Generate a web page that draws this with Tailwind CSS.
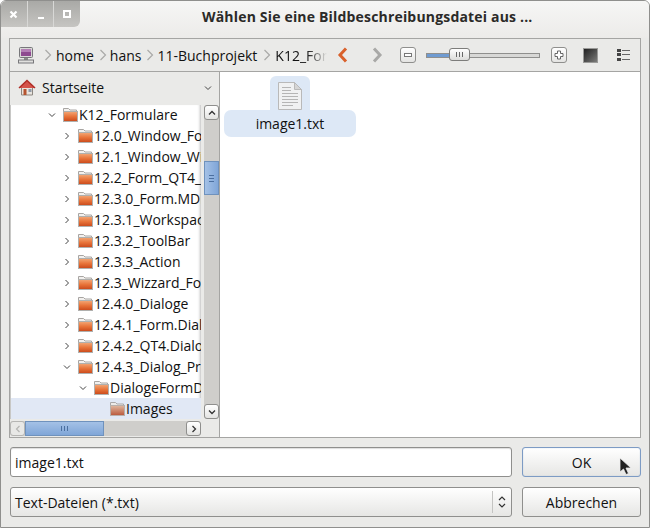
<!DOCTYPE html>
<html lang="de">
<head>
<meta charset="UTF-8" />
<title>Dialog</title>
<script src="https://cdn.jsdelivr.net/npm/@tailwindcss/browser@4"></script>
</head>
<body class="bg-white">
<svg width="0" height="0" class="absolute">
  <defs>
    <linearGradient id="fo" x1="0" y1="0" x2="0" y2="1"><stop offset="0" stop-color="#f3a877"/><stop offset="0.5" stop-color="#e8743a"/><stop offset="1" stop-color="#c9481a"/></linearGradient>
    <linearGradient id="fg" x1="0" y1="0" x2="0" y2="1"><stop offset="0" stop-color="#e0b8a0"/><stop offset="1" stop-color="#b9573a"/></linearGradient>
    <symbol id="folder" viewBox="0 0 16 15"><path d="M1.5 13V1.5h5l1.5 1.500h6.500V5" fill="#f2f0ee" stroke="#a8a5a2"/><rect x="1.500" y="4.500" width="14" height="10" fill="url(#fo)" stroke="#b0b0ae"/></symbol>
    <symbol id="folderg" viewBox="0 0 16 15"><path d="M1.5 13V1.5h5l1.5 1.500h6.500V5" fill="#eceae8" stroke="#aaa8a8"/><rect x="1.500" y="4.500" width="14" height="10" fill="url(#fg)" stroke="#b8b0ac"/></symbol>
    <symbol id="cr" viewBox="0 0 8 8"><path d="M2.500 1l3 3-3 3" fill="none" stroke="#444" stroke-width="1"/></symbol>
    <symbol id="cd" viewBox="0 0 8 8"><path d="M1 2.500l3 3 3-3" fill="none" stroke="#444" stroke-width="1"/></symbol>
  </defs>
</svg>

<div class="w-[650px] h-[528px] flex flex-col bg-[#eaeae8] border border-[#8f8f8d] rounded-t-[6px] overflow-hidden font-['Open_Sans','Noto_Sans',sans-serif] text-[14px] text-[#111]">

  <!-- Titlebar -->
  <div class="h-[37px] shrink-0 flex items-start bg-gradient-to-b from-[#f6f6f5] to-[#ecebe9] relative">
    <div class="flex h-[26px] w-[79px] rounded-br-[6px] bg-gradient-to-b from-[#a9a9a6] to-[#c6c5c2] text-white divide-x divide-[#d8d8d6]">
      <div class="flex-1 flex items-center justify-center">
        <svg width="9" height="9" viewBox="0 0 9 9"><path d="M1.500 1.500l6 6M7.500 1.500l-6 6" stroke="#fff" stroke-width="2.200"/></svg>
      </div>
      <div class="flex-1 flex items-end justify-center pb-[8px]"><div class="w-[6px] h-[2px] bg-white"></div></div>
      <div class="flex-1 flex items-center justify-center"><div class="w-[8px] h-[8px] border-2 border-white"></div></div>
    </div>
    <div class="absolute left-[201px] top-[5px] font-bold text-[14px] tracking-[0.18px] leading-[22px] text-[#2b2a28] whitespace-nowrap">Wählen Sie eine Bildbeschreibungsdatei aus ...</div>
  </div>

  <!-- File chooser frame -->
  <div class="mx-[8px] w-[632px] h-[400px] shrink-0 border border-[#a5a5a3] flex flex-col">
    <!-- Path bar -->
    <div class="h-[33px] shrink-0 flex items-center border-b border-[#a5a5a3] bg-[#eaeae8]">
      <svg class="ml-[7px] shrink-0" width="18" height="18" viewBox="0 0 18 18">
        <rect x="2.500" y="1.500" width="13" height="10" rx="1" fill="#d8d8d6" stroke="#77777a"/>
        <rect x="4" y="3" width="10" height="7" fill="#8e4a90"/>
        <rect x="4" y="3" width="10" height="3" fill="#b47fb6"/>
        <rect x="7" y="12" width="4" height="2" fill="#8a8a88"/>
        <rect x="1.500" y="14" width="15" height="3" fill="#e0e0de" stroke="#77777a"/>
      </svg>
      <div class="ml-[9px] flex items-center w-[293px] shrink-0 overflow-hidden whitespace-nowrap">
        <svg class="shrink-0" width="8" height="12" viewBox="0 0 8 12"><path d="M1.500 1l5 5-5 5" fill="none" stroke="#a9a9a7" stroke-width="1.200"/></svg>
        <span class="ml-[4px]">home</span>
        <svg class="ml-[5px] shrink-0" width="8" height="12" viewBox="0 0 8 12"><path d="M1.500 1l5 5-5 5" fill="none" stroke="#a9a9a7" stroke-width="1.200"/></svg>
        <span class="ml-[3px]">hans</span>
        <svg class="ml-[5px] shrink-0" width="8" height="12" viewBox="0 0 8 12"><path d="M1.500 1l5 5-5 5" fill="none" stroke="#a9a9a7" stroke-width="1.200"/></svg>
        <span class="ml-[3px]">11-Buchprojekt</span>
        <svg class="ml-[6px] shrink-0" width="8" height="12" viewBox="0 0 8 12"><path d="M1.500 1l5 5-5 5" fill="none" stroke="#a9a9a7" stroke-width="1.200"/></svg>
        <span class="ml-[4px] w-[52px] overflow-hidden shrink-0 bg-clip-text text-transparent bg-gradient-to-r from-[#111] from-60% to-[#eaeae8]">K12_Formulare</span>
      </div>
      <svg class="shrink-0" width="12" height="16" viewBox="0 0 12 16"><path d="M9 1.500L3 8l6 6.500" fill="none" stroke="#d9612b" stroke-width="3"/></svg>
      <svg class="ml-[22px] shrink-0" width="12" height="16" viewBox="0 0 12 16"><path d="M3 1.500L9 8l-6 6.500" fill="none" stroke="#a9a9a7" stroke-width="3"/></svg>
      <div class="ml-[17px] w-[16px] h-[16px] shrink-0 rounded-[3px] border border-[#8f8f8d] bg-gradient-to-b from-white to-[#e4e4e2] flex items-center justify-center">
        <div class="w-[8px] h-[4px] border border-[#777] bg-white"></div>
      </div>
      <!-- Zoom slider -->
      <div class="ml-[10px] w-[114px] h-[16px] shrink-0 relative flex items-center">
        <div class="w-full h-[5px] border border-[#8f8f8d] bg-[#d8d8d6]"><div class="w-[24px] h-full bg-[#6f9bd1]"></div></div>
        <div class="absolute left-[23px] top-[1px] w-[21px] h-[13px] rounded-[3px] border border-[#7d7d7b] bg-gradient-to-b from-white to-[#dcdcda] flex items-center justify-center gap-[2px]">
          <i class="w-px h-[5px] bg-[#666]"></i><i class="w-px h-[5px] bg-[#666]"></i><i class="w-px h-[5px] bg-[#666]"></i>
        </div>
      </div>
      <div class="ml-[11px] w-[16px] h-[16px] shrink-0 rounded-[3px] border border-[#8f8f8d] bg-gradient-to-b from-white to-[#e4e4e2] flex items-center justify-center">
        <svg width="10" height="10" viewBox="0 0 10 10"><path d="M3.500 1h3v2.500H9v3H6.500V9h-3V6.500H1v-3h2.500z" fill="#fff" stroke="#666"/></svg>
      </div>
      <div class="ml-[16px] w-[15px] h-[15px] shrink-0 border border-[#9a9a98] bg-gradient-to-br from-[#222] to-[#7d7d7b]"></div>
      <svg class="ml-[19px] shrink-0" width="13" height="12" viewBox="0 0 13 12">
        <rect x="0" y="0" width="4" height="3" fill="#444"/><rect x="0" y="4" width="4" height="3" fill="#444"/><rect x="0" y="9" width="4" height="3" fill="#444"/>
        <path d="M5 1.500h8M5 5.500h8M5 10.500h8" stroke="#666"/>
      </svg>
    </div>

    <div class="flex-1 min-h-0 flex">
      <!-- Left pane -->
      <div class="w-[210px] shrink-0 border-r border-[#a5a5a3] flex flex-col">
        <div class="h-[33px] shrink-0 flex items-center pl-[8px] pr-[7px] pb-[2px]">
          <svg class="shrink-0" width="18" height="17" viewBox="0 0 18 17">
            <path d="M3.500 8v8h11V8" fill="#e8e4de" stroke="#8d8780"/>
            <rect x="5.500" y="10" width="3" height="6" fill="#b5542f"/>
            <rect x="10.500" y="10" width="3" height="3" fill="#8f9aa8"/>
            <path d="M1 9l8-7.500L17 9" fill="#d4534a" stroke="#b02d26" stroke-width="1.500"/>
          </svg>
          <span class="ml-[6px]">Startseite</span>
          <svg class="ml-auto" width="8" height="8"><use href="#cd"/></svg>
        </div>
        <div class="flex-1 min-h-0 flex flex-col">
          <div class="flex flex-1 min-h-0">
            <div class="w-[191px] h-[314px] overflow-hidden bg-white border-l border-[#c8c8c6] shadow-[inset_-3px_0_3px_-2px_#bbb]">
              <div id="tree" class="-mt-px"></div>
            </div>
            <!-- Vertical scrollbar -->
            <div class="ml-[3px] w-[15px] h-[314px] flex flex-col bg-[#cfcecb] rounded-[3px]">
              <div class="h-[15px] rounded-[3px] border border-[#8f8f8d] bg-gradient-to-b from-white to-[#e4e4e2] flex items-center justify-center">
                <svg width="8" height="8" viewBox="0 0 8 8"><path d="M1 5.500l3-3 3 3" fill="none" stroke="#333" stroke-width="1.300"/></svg>
              </div>
              <div class="mt-[41px] h-[34px] border border-[#6f92bd] bg-gradient-to-r from-[#a4c1e6] to-[#80a6d8] flex flex-col items-center justify-center gap-[2px]">
                <i class="w-[5px] h-px bg-[#4b6f9f]"></i><i class="w-[5px] h-px bg-[#4b6f9f]"></i><i class="w-[5px] h-px bg-[#4b6f9f]"></i>
              </div>
              <div class="mt-auto h-[15px] rounded-[3px] border border-[#8f8f8d] bg-gradient-to-b from-white to-[#e4e4e2] flex items-center justify-center">
                <svg width="8" height="8" viewBox="0 0 8 8"><path d="M1 2.500l3 3 3-3" fill="none" stroke="#333" stroke-width="1.300"/></svg>
              </div>
            </div>
          </div>
          <!-- Horizontal scrollbar -->
          <div class="mt-[3px] mb-[1px] w-[191px] h-[15px] flex bg-[#cfcecb] rounded-[3px]">
            <div class="w-[15px] rounded-[3px] border border-[#b5b5b3] bg-[#e8e8e6] flex items-center justify-center">
              <svg width="8" height="8" viewBox="0 0 8 8"><path d="M5.500 1l-3 3 3 3" fill="none" stroke="#b5b5b3" stroke-width="1.200"/></svg>
            </div>
            <div class="w-[79px] border border-[#6f92bd] bg-gradient-to-b from-[#a4c1e6] to-[#80a6d8] flex items-center justify-center gap-[2px]">
              <i class="w-px h-[5px] bg-[#4b6f9f]"></i><i class="w-px h-[5px] bg-[#4b6f9f]"></i><i class="w-px h-[5px] bg-[#4b6f9f]"></i>
            </div>
            <div class="ml-auto w-[15px] rounded-[3px] border border-[#8f8f8d] bg-gradient-to-b from-white to-[#e4e4e2] flex items-center justify-center">
              <svg width="8" height="8" viewBox="0 0 8 8"><path d="M2.500 1l3 3-3 3" fill="none" stroke="#333" stroke-width="1.300"/></svg>
            </div>
          </div>
        </div>
      </div>

      <!-- File area -->
      <div class="flex-1 bg-white pl-[4px] pt-[4px]">
        <div class="w-[132px] flex flex-col items-center">
          <div class="w-[40px] h-[34px] rounded-t-[6px] bg-[#dde8f6] flex justify-center items-start pt-[6px]">
            <svg width="24" height="28" viewBox="0 0 24 28">
              <path d="M.5 .5h16l7 7v20h-23z" fill="#f0f1f2" stroke="#b9b9b9"/>
              <path d="M16.500 .5v7h7z" fill="#d5d5d5" stroke="#b9b9b9"/>
              <path d="M4 5.500h9M4 8.500h9M4 11.500h16M4 14.500h16M4 17.500h16M4 20.500h16M4 23.500h11" stroke="#b5b5b5"/>
            </svg>
          </div>
          <div class="w-[132px] h-[27px] rounded-[7px] bg-[#dde8f6] flex items-center justify-center">image1.txt</div>
        </div>
      </div>
    </div>
  </div>

  <!-- Bottom form -->
  <div class="mt-[9px] ml-[9px] flex gap-[10px]">
    <div class="w-[502px] h-[30px] rounded-[3px] border border-[#8f8f8d] bg-white pl-[4px] flex items-center shadow-[inset_0_1px_1px_#ddd]">image1.txt</div>
    <div class="w-[119px] h-[30px] rounded-[3px] border border-[#7d9bc4] bg-gradient-to-b from-white to-[#e6e6e4] flex items-center justify-center relative shadow-[inset_0_0_1px_#9ab5d8]">
      OK
      <svg class="absolute left-[96px] top-[9px]" width="13" height="19" viewBox="0 0 13 19"><path d="M1 1v14l3.500-3 2.500 5.500 2.500-1-2.500-5.500H12z" fill="#222" stroke="#eee" stroke-width=".8"/></svg>
    </div>
  </div>
  <div class="mt-[10px] ml-[9px] flex gap-[10px]">
    <div class="w-[502px] h-[30px] rounded-[3px] border border-[#8f8f8d] bg-gradient-to-b from-white to-[#e6e6e4] pl-[4px] flex items-center">
      <span>Text-Dateien (*.txt)</span>
      <div class="ml-auto w-[13px] h-[22px] border-l border-[#c4c4c2] pl-[5px] flex items-center box-content">
        <svg width="8" height="12" viewBox="0 0 8 12"><path d="M1 4l3-3 3 3M1 8l3 3 3-3" fill="none" stroke="#333" stroke-width="1.200"/></svg>
      </div>
    </div>
    <div class="w-[119px] h-[30px] rounded-[3px] border border-[#8f8f8d] bg-gradient-to-b from-white to-[#e6e6e4] flex items-center justify-center">Abbrechen</div>
  </div>
</div>

<script>
  // [indent of the label, arrow, name, selected]
  const rows = [
    [37, "d", "K12_Formulare"],
    [52, "r", "12.0_Window_Form"],
    [52, "r", "12.1_Window_Widget"],
    [52, "r", "12.2_Form_QT4_Designer"],
    [52, "r", "12.3.0_Form.MDI_Window"],
    [52, "r", "12.3.1_Workspace"],
    [52, "r", "12.3.2_ToolBar"],
    [52, "r", "12.3.3_Action"],
    [52, "r", "12.3_Wizzard_Form"],
    [52, "r", "12.4.0_Dialoge"],
    [52, "r", "12.4.1_Form.Dialog"],
    [52, "r", "12.4.2_QT4.Dialog"],
    [52, "d", "12.4.3_Dialog_Projekt"],
    [68, "d", "DialogeFormDialog"],
    [84, "", "Images", true],
  ];
  const tree = document.getElementById("tree");
  rows.forEach(([x, arrow, name, sel]) => {
    const row = document.createElement("div");
    row.className = "h-[21px] flex items-center whitespace-nowrap " + (sel ? "bg-[#e1e8f5]" : "");
    row.style.paddingLeft = x + "px";
    const arrowSvg = arrow ? `<svg class="shrink-0" width="8" height="8"><use href="#c${arrow}"/></svg>` : `<span class="w-[8px] shrink-0"></span>`;
    row.innerHTML = `${arrowSvg}<svg class="ml-[6px] shrink-0" width="16" height="15"><use href="#${sel ? "folderg" : "folder"}"/></svg><span class="ml-[1px]">${name}</span>`;
    tree.appendChild(row);
  });
</script>
</body>
</html>
